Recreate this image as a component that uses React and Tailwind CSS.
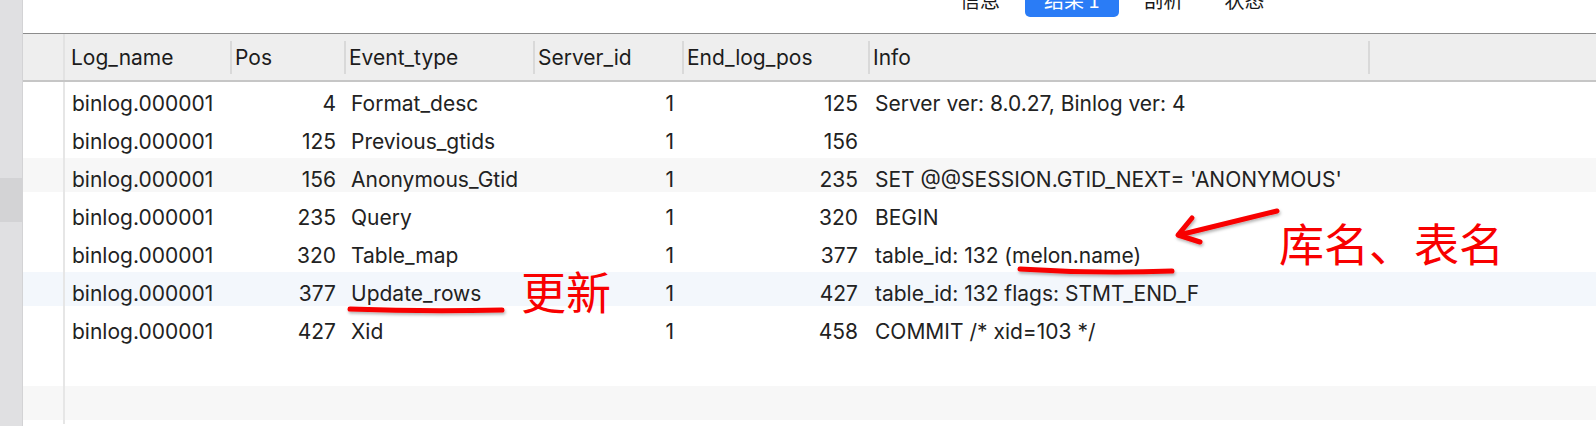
import React from 'react';

const cellFont = { fontFamily: 'Inter, "Liberation Sans", sans-serif' };

// rows of the binlog result grid
const rows = [
  { name: 'binlog.000001', pos: '4', type: 'Format_desc', sid: '1', end: '125', info: 'Server ver: 8.0.27, Binlog ver: 4', bg: 'bg-white' },
  { name: 'binlog.000001', pos: '125', type: 'Previous_gtids', sid: '1', end: '156', info: '', bg: 'bg-white' },
  { name: 'binlog.000001', pos: '156', type: 'Anonymous_Gtid', sid: '1', end: '235', info: "SET @@SESSION.GTID_NEXT= 'ANONYMOUS'", bg: 'bg-[#f7f7f7]' },
  { name: 'binlog.000001', pos: '235', type: 'Query', sid: '1', end: '320', info: 'BEGIN', bg: 'bg-white' },
  { name: 'binlog.000001', pos: '320', type: 'Table_map', sid: '1', end: '377', info: 'table_id: 132 (melon.name)', bg: 'bg-white' },
  { name: 'binlog.000001', pos: '377', type: 'Update_rows', sid: '1', end: '427', info: 'table_id: 132 flags: STMT_END_F', bg: 'bg-[#f3f7fc]' },
  { name: 'binlog.000001', pos: '427', type: 'Xid', sid: '1', end: '458', info: 'COMMIT /* xid=103 */', bg: 'bg-white' },
  { name: '', pos: '', type: '', sid: '', end: '', info: '', bg: 'bg-white' },
  { name: '', pos: '', type: '', sid: '', end: '', info: '', bg: 'bg-[#f7f7f7]' },
];

const tabs = ['信息', '结果 1', '剖析', '状态'];

const HeaderCell = ({ label, width, first }) => (
  <div className={`flex items-center h-full shrink-0 ${width}`}>
    {!first && <div className="w-[2px] h-[33px] bg-[#d9d9d9]" />}
    <span className={first ? 'pl-[6px]' : 'pl-[3px]'}>{label}</span>
  </div>
);

const Row = ({ r }) => (
  <div className="flex h-[38px]">
    <div className="w-[42px] shrink-0 border-r-2 border-[#e6e6e6]">
      <div className={`h-[34px] ${r.bg}`} />
    </div>
    <div className="flex-1">
      <div className={`h-[34px] flex text-[21px] leading-[25px] text-[#222222] ${r.bg}`}>
        <div className="w-[165px] shrink-0 pl-[7px] pt-[9px]">{r.name}</div>
        <div className="w-[114px] shrink-0 pr-[8px] pt-[9px] text-right">{r.pos}</div>
        <div className="w-[189px] shrink-0 pl-[7px] pt-[9px]">{r.type}</div>
        <div className="w-[149px] shrink-0 pr-[8px] pt-[9px] text-right">{r.sid}</div>
        <div className="w-[186px] shrink-0 pr-[10px] pt-[9px] text-right">{r.end}</div>
        <div className="w-[500px] shrink-0 pl-[7px] pt-[9px] whitespace-nowrap">{r.info}</div>
      </div>
    </div>
  </div>
);

export default function App() {
  return (
    <div className="relative w-[1596px] h-[426px] overflow-hidden bg-white flex" style={cellFont}>
      {/* left gutter */}
      <div className="w-[23px] shrink-0 bg-[#e0e0e2] border-r border-[#d3d3d5] flex flex-col">
        <div className="h-[178px]" />
        <div className="h-[44px] bg-[#d3d3d5]" />
      </div>

      <div className="flex-1 flex flex-col">
        {/* tab bar, only the lower half is in view */}
        <div className="h-[33px] overflow-hidden">
          <div
            className="ml-[921px] -mt-[17px] flex gap-[9px] text-[20px] text-[#1a1a1a]"
            style={{ fontFamily: '"Noto Sans CJK SC", "Liberation Sans", sans-serif' }}
          >
            {tabs.map((t) => (
              <div
                key={t}
                className={`h-[34px] flex items-center rounded-[5px] ${t === '结果 1' ? 'px-[19px] bg-[#2a7cf6] text-white' : 'px-[16px]'}`}
              >
                {t}
              </div>
            ))}
          </div>
        </div>

        {/* column header */}
        <div className="h-[49px] border-t border-[#8c8c8c] border-b-2 border-b-[#c6c6c6] bg-[#eeeeee] flex text-[21px] leading-[25px] text-[#1c1c1c]">
          <div className="w-[42px] shrink-0 border-r-2 border-[#e2e2e2]" />
          <HeaderCell label="Log_name" width="w-[165px]" first />
          <HeaderCell label="Pos" width="w-[114px]" />
          <HeaderCell label="Event_type" width="w-[189px]" />
          <HeaderCell label="Server_id" width="w-[149px]" />
          <HeaderCell label="End_log_pos" width="w-[186px]" />
          <HeaderCell label="Info" width="w-[500px]" />
          <HeaderCell label="" width="flex-1" />
        </div>

        {rows.map((r, i) => (
          <Row key={i} r={r} />
        ))}
      </div>

      {/* red annotations drawn on top of the screenshot */}
      <svg className="absolute inset-0 pointer-events-none" width="1596" height="426" viewBox="0 0 1596 426">
        <defs>
          <filter id="sh" x="-20%" y="-50%" width="140%" height="200%">
            <feDropShadow dx="1" dy="2" stdDeviation="1.5" floodColor="#000" floodOpacity="0.3" />
          </filter>
        </defs>
        <g stroke="#f80000" strokeWidth="5" strokeLinecap="round" strokeLinejoin="round" fill="none" filter="url(#sh)">
          <path d="M1277 211 L1179 235" />
          <path d="M1192 218 L1178 235 L1200 242" />
          <path d="M1020 269 Q1096 274 1172 271" />
          <path d="M350 309 Q426 312 502 310" />
        </g>
      </svg>
      <span
        className="absolute left-[1279px] top-[220px] text-[45px] leading-[45px] text-[#f80000] whitespace-nowrap"
        style={{ fontFamily: '"Noto Sans CJK SC", sans-serif' }}
      >
        库名、表名
      </span>
      <span
        className="absolute left-[521px] top-[268px] text-[45px] leading-[45px] text-[#f80000] whitespace-nowrap"
        style={{ fontFamily: '"Noto Sans CJK SC", sans-serif' }}
      >
        更新
      </span>
    </div>
  );
}
